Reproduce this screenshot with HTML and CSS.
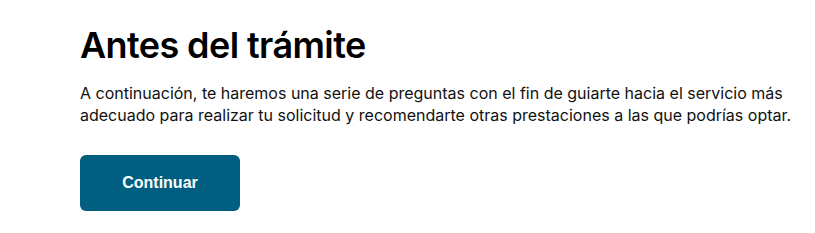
FILE: index.html
```html
<!DOCTYPE html>
<html lang="es">
<head>
<meta charset="utf-8">
<link rel="stylesheet" href="styles.css">
</head>
<body>
<main class="page">
  <h1 class="title">Antes del trámite</h1>
  <p class="intro">A continuación, te haremos una serie de preguntas con el fin de guiarte hacia el servicio más adecuado para realizar tu solicitud y recomendarte otras prestaciones a las que podrías optar.</p>
  <button class="btn" type="button">Continuar</button>
</main>
</body>
</html>
```
FILE: styles.css
```css
html, body {
  margin: 0;
  padding: 0;
  background: #ffffff;
}
.page {
  padding: 23px 0 0 80px;
  width: 730px;
  font-family: Inter, "Noto Sans", sans-serif;
  color: #111111;
}
.title {
  margin: 0;
  font-size: 36px;
  line-height: 44px;
  font-weight: 600;
  letter-spacing: -0.6px;
  color: #000000;
}
.intro {
  margin: 15px 0 0;
  font-size: 16px;
  line-height: 22px;
  color: #111111;
}
.btn {
  margin-top: 29px;
  width: 160px;
  height: 56px;
  border: none;
  border-radius: 6px;
  background: #005f80;
  color: #ffffff;
  font-family: "Liberation Sans", Arial, sans-serif;
  font-weight: 700;
  font-size: 16px;
  cursor: pointer;
}
```
